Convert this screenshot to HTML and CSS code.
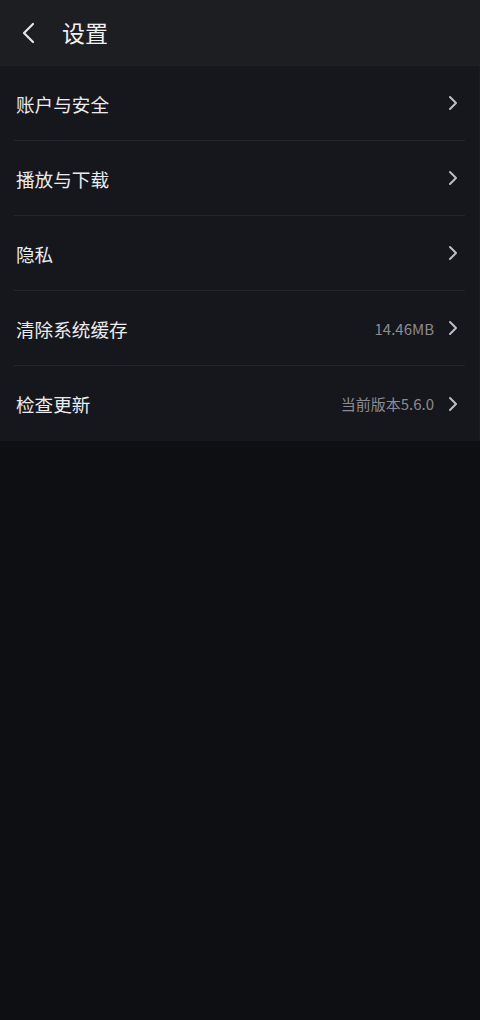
FILE: index.html
```html
<!DOCTYPE html>
<html lang="zh-CN">
<head>
<meta charset="utf-8">
<title>设置</title>
<link rel="stylesheet" href="styles.css">
</head>
<body>
<header class="topbar">
  <span class="back">
    <svg width="16" height="24" viewBox="0 0 16 24"><path d="M12 3 L3 12 L12 21" fill="none" stroke="#e6e6e8" stroke-width="2.2" stroke-linecap="round" stroke-linejoin="round"/></svg>
  </span>
  <h1 class="title">设置</h1>
</header>
<ul class="list">
  <li class="row"><span class="label">账户与安全</span><span class="right"><svg class="chev" width="10" height="16" viewBox="0 0 10 16"><path d="M2 2 L8 8 L2 14" fill="none" stroke="#bdbdc2" stroke-width="2" stroke-linecap="round" stroke-linejoin="round"/></svg></span></li>
  <li class="row"><span class="label">播放与下载</span><span class="right"><svg class="chev" width="10" height="16" viewBox="0 0 10 16"><path d="M2 2 L8 8 L2 14" fill="none" stroke="#bdbdc2" stroke-width="2" stroke-linecap="round" stroke-linejoin="round"/></svg></span></li>
  <li class="row"><span class="label">隐私</span><span class="right"><svg class="chev" width="10" height="16" viewBox="0 0 10 16"><path d="M2 2 L8 8 L2 14" fill="none" stroke="#bdbdc2" stroke-width="2" stroke-linecap="round" stroke-linejoin="round"/></svg></span></li>
  <li class="row"><span class="label">清除系统缓存</span><span class="right"><span class="value">14.46MB</span><svg class="chev" width="10" height="16" viewBox="0 0 10 16"><path d="M2 2 L8 8 L2 14" fill="none" stroke="#bdbdc2" stroke-width="2" stroke-linecap="round" stroke-linejoin="round"/></svg></span></li>
  <li class="row last"><span class="label">检查更新</span><span class="right"><span class="value">当前版本5.6.0</span><svg class="chev" width="10" height="16" viewBox="0 0 10 16"><path d="M2 2 L8 8 L2 14" fill="none" stroke="#bdbdc2" stroke-width="2" stroke-linecap="round" stroke-linejoin="round"/></svg></span></li>
</ul>
</body>
</html>
```
FILE: styles.css
```css
html, body {
  margin: 0;
  padding: 0;
  background: #0e0f12;
  font-family: "Noto Sans CJK SC", "Noto Sans", sans-serif;
  color: #e8e8ea;
}
.topbar {
  height: 66px;
  background: #1d1e22;
  display: flex;
  align-items: center;
  padding-left: 21px;
  box-sizing: border-box;
  border-bottom: 1px solid #202126;
}
.back {
  display: flex;
  width: 16px;
  height: 24px;
  margin-right: 25px;
}
.title {
  margin: 0;
  font-size: 23px;
  font-weight: 400;
  color: #f0f0f2;
  line-height: 1;
}
.list {
  margin: 0;
  padding: 0 14px;
  list-style: none;
  background: #16171c;
  border-right: 1px solid #1b1c21;
}
.row {
  height: 75px;
  display: flex;
  align-items: center;
  justify-content: space-between;
  border-bottom: 1px solid #24252a;
  box-sizing: border-box;
  padding-left: 2px;
}
.row.last {
  border-bottom: none;
}
.label {
  font-size: 18.6px;
  color: #ececee;
}
.right {
  display: flex;
  align-items: center;
}
.value {
  font-size: 15px;
  color: #8b8b90;
  margin-right: 14px;
}
.chev {
  margin-right: 7px;
}
```
